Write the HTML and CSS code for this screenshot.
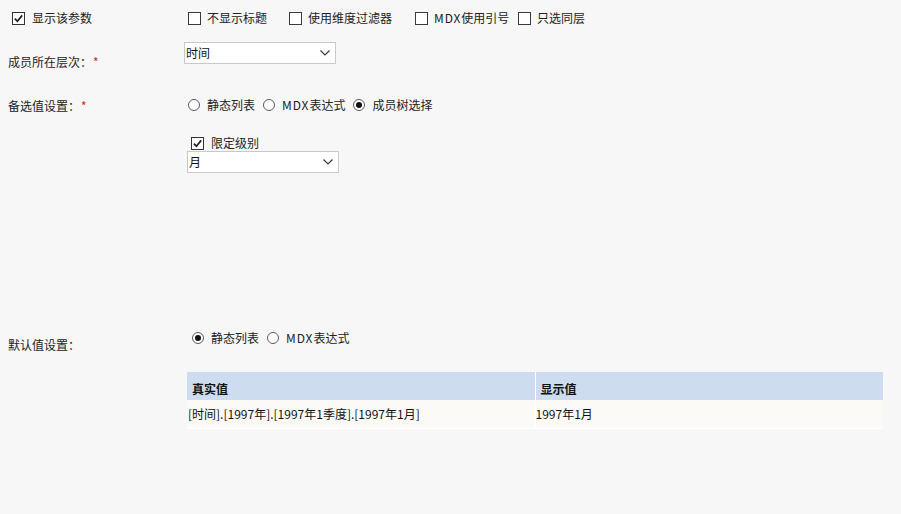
FILE: index.html
```html
<!DOCTYPE html>
<html lang="zh-CN">
<head>
<meta charset="utf-8">
<title>参数设置</title>
<link rel="stylesheet" href="styles.css">
</head>
<body>
<div class="page">
  <div class="row row1">
    <div class="label label1">
      <span class="cb checked"><svg viewBox="0 0 13 13" width="13" height="13"><rect x="0.5" y="0.5" width="12" height="12" fill="#fff" stroke="#333"/><path d="M2.8 6.6 L5.4 9.2 L10.2 3.4" fill="none" stroke="#222" stroke-width="1.7"/></svg></span>
      <span class="txt">显示该参数</span>
    </div>
    <div class="ctrl opts">
      <span class="opt w1"><span class="cb"></span><span class="txt">不显示标题</span></span>
      <span class="opt w2"><span class="cb"></span><span class="txt">使用维度过滤器</span></span>
      <span class="opt w3"><span class="cb"></span><span class="txt"><span class="lat">MDX</span>使用引号</span></span>
      <span class="opt"><span class="cb"></span><span class="txt">只选同层</span></span>
    </div>
  </div>

  <div class="row row2">
    <div class="label label2">成员所在层次：<span class="req">*</span></div>
    <div class="ctrl">
      <div class="select sel1"><span>时间</span><svg class="chev" viewBox="0 0 10 6" width="10" height="6"><path d="M0.5 0.5 L5 5 L9.5 0.5" fill="none" stroke="#333" stroke-width="1.1"/></svg></div>
    </div>
  </div>

  <div class="row row3">
    <div class="label label3">备选值设置：<span class="req">*</span></div>
    <div class="ctrl">
      <div class="radios radios1">
        <span class="ropt"><span class="rd"></span><span class="txt">静态列表</span></span>
        <span class="ropt"><span class="rd"></span><span class="txt"><span class="lat">MDX</span>表达式</span></span>
        <span class="ropt"><span class="rd on"></span><span class="txt">成员树选择</span></span>
      </div>
      <div class="sub">
        <div class="subcheck">
          <span class="cb checked"><svg viewBox="0 0 13 13" width="13" height="13"><rect x="0.5" y="0.5" width="12" height="12" fill="#fff" stroke="#333"/><path d="M2.8 6.6 L5.4 9.2 L10.2 3.4" fill="none" stroke="#222" stroke-width="1.7"/></svg></span>
          <span class="txt">限定级别</span>
        </div>
        <div class="select sel2"><span>月</span><svg class="chev" viewBox="0 0 10 6" width="10" height="6"><path d="M0.5 0.5 L5 5 L9.5 0.5" fill="none" stroke="#333" stroke-width="1.1"/></svg></div>
      </div>
    </div>
  </div>

  <div class="row row4">
    <div class="label label4">默认值设置：</div>
    <div class="ctrl">
      <div class="radios radios2">
        <span class="ropt"><span class="rd on"></span><span class="txt">静态列表</span></span>
        <span class="ropt"><span class="rd"></span><span class="txt"><span class="lat">MDX</span>表达式</span></span>
      </div>
      <table class="grid">
        <thead>
          <tr><th class="c1">真实值</th><th class="c2">显示值</th></tr>
        </thead>
        <tbody>
          <tr><td class="c1">[时间].[1997年].[1997年1季度].[1997年1月]</td><td class="c2">1997年1月</td></tr>
        </tbody>
      </table>
    </div>
  </div>
</div>
</body>
</html>
```

FILE: styles.css
```css
html, body {
  margin: 0;
  padding: 0;
}
body {
  background: #f7f7f7;
  font-family: "Noto Sans CJK SC", "Microsoft YaHei", sans-serif;
  font-size: 12px;
  line-height: 16px;
  color: #222;
  width: 901px;
  height: 514px;
  overflow: hidden;
}
.page {
  padding-left: 8px;
}
.row {
  display: flex;
  align-items: flex-start;
}
.label {
  width: 176px;
  flex: none;
  white-space: nowrap;
  line-height: 16px;
}
.ctrl {
  flex: none;
}
.req {
  color: #e4191c;
  margin-left: 1px;
}
.txt {
  white-space: nowrap;
}
.lat {
  letter-spacing: 0.9px;
}

/* checkbox */
.cb {
  display: inline-block;
  width: 13px;
  height: 13px;
  box-sizing: border-box;
  border: 1px solid #3a3a3a;
  background: #fff;
  flex: none;
}
.cb.checked {
  border: none;
  background: none;
}
.cb svg {
  display: block;
}

/* row 1 */
.row1 {
  margin-top: 10px;
  height: 16px;
}
.label1 {
  display: flex;
  align-items: center;
  height: 16px;
  padding-left: 4px;
  width: 172px;
}
.label1 .txt {
  margin-left: 7px;
}
.opts {
  display: flex;
  align-items: center;
  height: 16px;
  padding-left: 4px;
}
.opt {
  display: flex;
  align-items: center;
}
.opt .txt {
  margin-left: 6px;
}
.w1 { width: 101px; }
.w2 { width: 126px; }
.w3 { width: 103px; }

/* row 2 */
.row2 {
  margin-top: 16px;
}
.label2 {
  margin-top: 12px;
}
.select {
  display: flex;
  align-items: center;
  justify-content: space-between;
  box-sizing: border-box;
  height: 22px;
  border: 1px solid #c9c9c9;
  background: #fff;
  padding: 0 5px 0 1px;
  color: #111;
}
.chev {
  display: block;
}
.sel1 {
  width: 152px;
}

/* row 3 */
.row3 {
  margin-top: 27px;
}
.label3 {
  margin-top: 1px;
}
.radios {
  display: flex;
  align-items: center;
  height: 16px;
}
.radios1 {
  padding-left: 4px;
}
.ropt {
  display: flex;
  align-items: center;
  margin-right: 8px;
}
.ropt .txt {
  margin-left: 7px;
}
.rd {
  display: inline-block;
  box-sizing: border-box;
  width: 12px;
  height: 12px;
  border: 1px solid #5a5a5a;
  border-radius: 50%;
  background: #fff;
  position: relative;
  flex: none;
}
.rd.on::after {
  content: "";
  position: absolute;
  left: 2px;
  top: 2px;
  width: 6px;
  height: 6px;
  border-radius: 50%;
  background: #111;
}
.sub {
  margin-top: 22px;
  padding-left: 3px;
}
.subcheck {
  display: flex;
  align-items: center;
  height: 16px;
  padding-left: 4px;
}
.subcheck .txt {
  margin-left: 7px;
}
.sel2 {
  width: 152px;
}

/* row 4 */
.row4 {
  margin-top: 157px;
}
.label4 {
  margin-top: 7px;
}
.radios2 {
  padding-left: 8px;
}
.grid {
  margin-top: 26px;
  margin-left: 3px;
  width: 696px;
  border-collapse: collapse;
  border-spacing: 0;
  table-layout: fixed;
}
.grid th, .grid td {
  text-align: left;
  white-space: nowrap;
  overflow: hidden;
}
.grid th {
  background: #cddcef;
  font-weight: bold;
  color: #111;
  height: 28px;
  box-sizing: border-box;
  padding: 9px 4px 3px 5px;
  vertical-align: top;
}
.grid td {
  background: #fbfaf6;
  color: #111;
  height: 28px;
  box-sizing: border-box;
  padding: 0 1px;
  vertical-align: middle;
  border-bottom: 1px solid #fff;
}
.grid .c1 {
  width: 348px;
}
.grid .c2 {
  border-left: 1px solid #fff;
}
.grid td.c2 {
  padding-left: 0;
}
```
